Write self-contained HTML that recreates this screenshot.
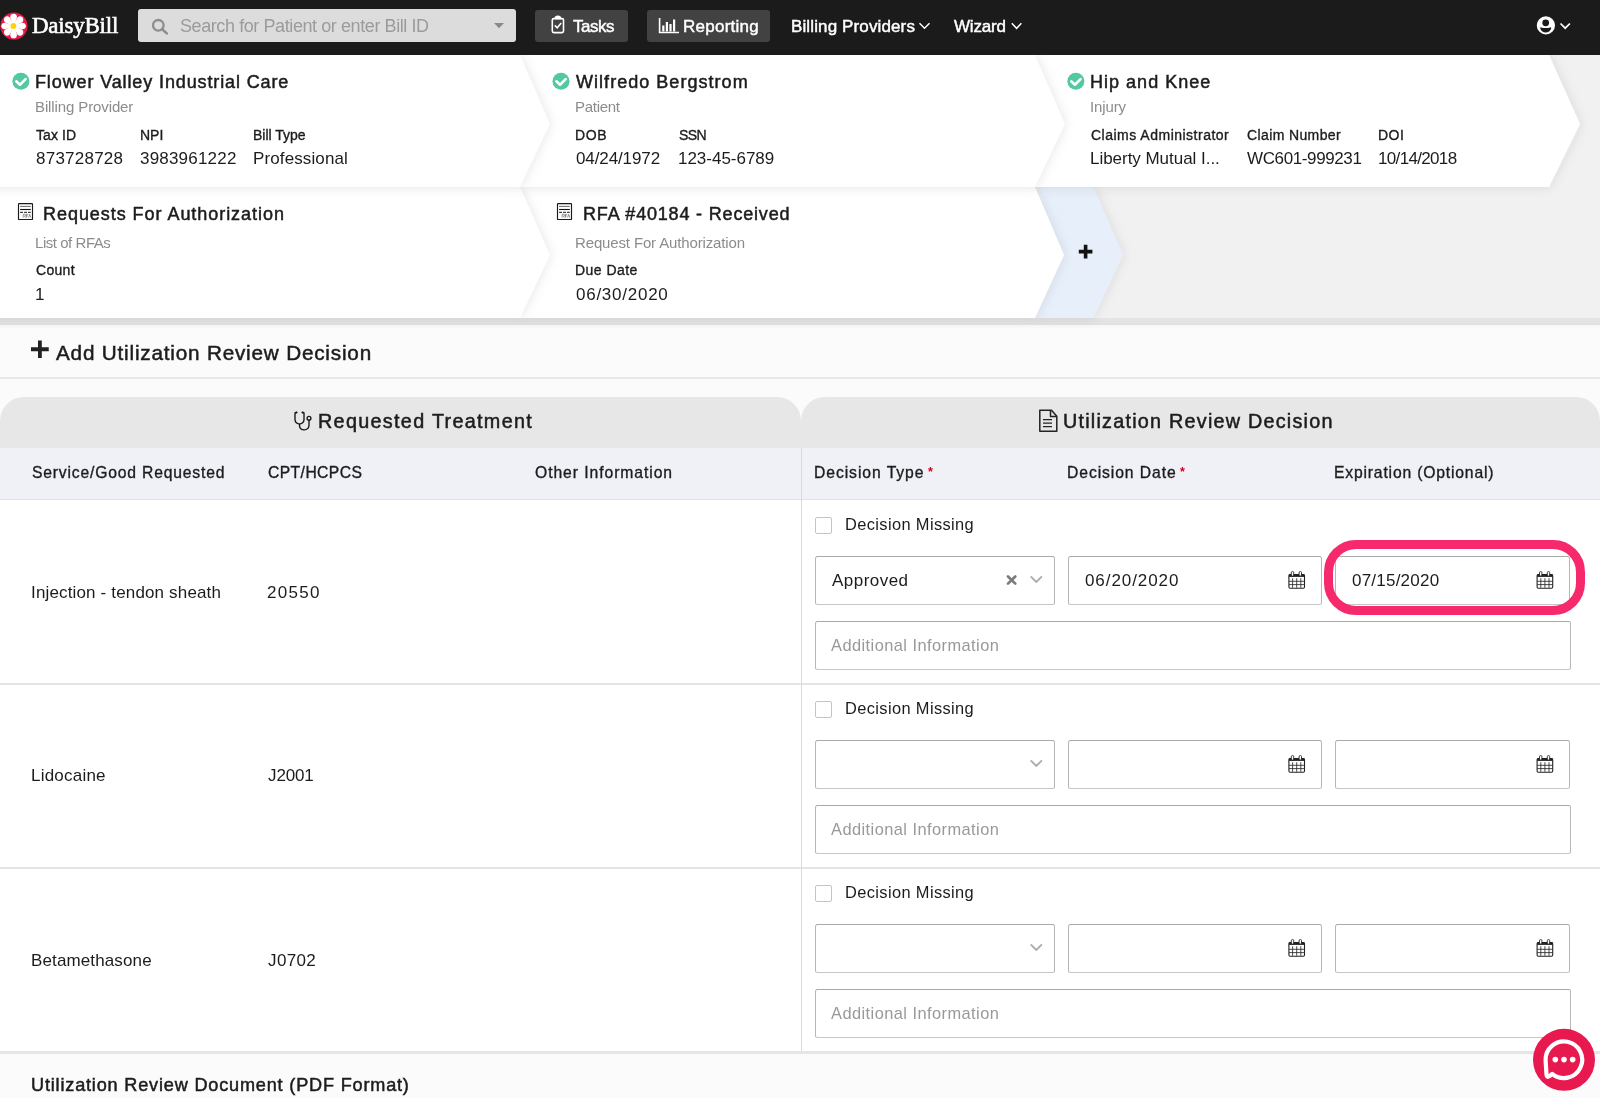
<!DOCTYPE html>
<html><head><meta charset="utf-8">
<style>
html,body{margin:0;padding:0;}
body{width:1600px;height:1098px;overflow:hidden;position:relative;background:#fbfbfb;font-family:"Liberation Sans",sans-serif;}
.a{position:absolute;box-sizing:border-box;}
.t{position:absolute;white-space:nowrap;will-change:transform;}
svg{position:absolute;overflow:visible;}
.inp{position:absolute;box-sizing:border-box;border:1px solid #b6b6b6;border-top-color:#a9a9a9;border-bottom-color:#c6c6c6;border-radius:2.5px;background:#fff;}
.cb{position:absolute;box-sizing:border-box;width:17px;height:16.5px;border:1px solid #c4c4c4;border-radius:2px;background:#fff;}
</style></head><body>

<!-- card area bg -->
<div class="a" style="left:0;top:54px;width:1600px;height:264px;background:#f1f1f1;"></div>
<div class="a" style="left:0;top:318px;width:1600px;height:7px;background:linear-gradient(#e5e5e5,#e1e1e1);"></div>
<div class="a" style="left:0;top:325px;width:1600px;height:4px;background:linear-gradient(#f6f6f6,#fbfbfb);"></div>
<svg style="left:0;top:0" width="1600" height="330">
  <defs>
    <filter id="sh" x="-10%" y="-30%" width="120%" height="160%">
      <feDropShadow dx="0" dy="0" stdDeviation="6" flood-color="#000" flood-opacity="0.11"/>
    </filter>
  </defs>
  <polygon filter="url(#sh)" fill="#e7effa" points="1035,187 1093,187 1123,255 1093,318 1035,318 1064,255"/>
  <polygon filter="url(#sh)" fill="#fff" points="520,187 1035,187 1064,255 1035,318 520,318 550,255"/>
  <polygon filter="url(#sh)" fill="#fff" points="-20,187 520,187 550,255 520,318 -20,318"/>
  <polygon filter="url(#sh)" fill="#fff" points="1035,55 1549,55 1580,124 1549,187 1035,187 1065,124"/>
  <polygon filter="url(#sh)" fill="#fff" points="520,55 1035,55 1065,124 1035,187 520,187 550,124"/>
  <polygon filter="url(#sh)" fill="#fff" points="-20,55 520,55 550,124 520,187 -20,187"/>
</svg>

<!-- nav -->
<div class="a" style="left:0;top:0;width:1600px;height:54.5px;background:#1b1b1b;"></div>
<svg style="left:0;top:0" width="40" height="54" viewBox="0 0 40 54">
  <circle cx="13.9" cy="26.1" r="13.6" fill="#e8194a"/>
  <g fill="#fff" transform="translate(13.6,26)"><path transform="rotate(0)" d="M-1.3 -2.2 L-3.3 -8.4 A3.35 3.35 0 1 1 3.3 -8.4 L1.3 -2.2 Z"/><path transform="rotate(45)" d="M-1.3 -2.2 L-3.3 -8.4 A3.35 3.35 0 1 1 3.3 -8.4 L1.3 -2.2 Z"/><path transform="rotate(90)" d="M-1.3 -2.2 L-3.3 -8.4 A3.35 3.35 0 1 1 3.3 -8.4 L1.3 -2.2 Z"/><path transform="rotate(135)" d="M-1.3 -2.2 L-3.3 -8.4 A3.35 3.35 0 1 1 3.3 -8.4 L1.3 -2.2 Z"/><path transform="rotate(180)" d="M-1.3 -2.2 L-3.3 -8.4 A3.35 3.35 0 1 1 3.3 -8.4 L1.3 -2.2 Z"/><path transform="rotate(225)" d="M-1.3 -2.2 L-3.3 -8.4 A3.35 3.35 0 1 1 3.3 -8.4 L1.3 -2.2 Z"/><path transform="rotate(270)" d="M-1.3 -2.2 L-3.3 -8.4 A3.35 3.35 0 1 1 3.3 -8.4 L1.3 -2.2 Z"/><path transform="rotate(315)" d="M-1.3 -2.2 L-3.3 -8.4 A3.35 3.35 0 1 1 3.3 -8.4 L1.3 -2.2 Z"/><circle r="3.8"/></g>
  <circle cx="13.4" cy="25.9" r="2.9" fill="#ffd200"/>
</svg>
<div class="a" style="left:138px;top:9.25px;width:378px;height:32.5px;background:#dcdcdc;border-radius:3px;"></div>
<div class="a" style="left:535px;top:9.6px;width:92.8px;height:32px;background:#424242;border-radius:3px;"></div>
<div class="a" style="left:647px;top:9.6px;width:123px;height:32px;background:#424242;border-radius:3px;"></div>
<svg style="left:0;top:0" width="1600" height="54">
  <circle cx="158.3" cy="25.3" r="5.3" fill="none" stroke="#8e8e8e" stroke-width="2.3"/>
  <line x1="162.2" y1="29.2" x2="166.8" y2="33.4" stroke="#8e8e8e" stroke-width="2.6" stroke-linecap="round"/>
  <path d="M494 23 L504 23 L499 28.3 Z" fill="#8a8a8a"/>
  <rect x="552.3" y="18.6" width="11.2" height="14" rx="1.5" fill="none" stroke="#fff" stroke-width="1.6"/>
  <path d="M555.3 18.6 L555.3 17.3 Q557.9 15.2 560.5 17.3 L560.5 18.6 Z" fill="#fff" stroke="#fff" stroke-width="1.3"/>
  <path d="M554.8 25.4 L557.2 27.8 L561.2 23" fill="none" stroke="#fff" stroke-width="1.5"/>
  <path d="M659.6 18 L659.6 32.5 L679 32.5" fill="none" stroke="#fff" stroke-width="1.6"/>
  <rect x="662.2" y="25.5" width="2.2" height="6" fill="#fff"/>
  <rect x="665.8" y="22" width="2.2" height="9.5" fill="#fff"/>
  <rect x="669.4" y="24" width="2.2" height="7.5" fill="#fff"/>
  <rect x="673" y="19.5" width="2.2" height="12" fill="#fff"/>
  <path d="M919.5 23.3 L924.5 28.3 L929.5 23.3" fill="none" stroke="#fff" stroke-width="1.5"/>
  <path d="M1011.8 23.3 L1016.6 28.3 L1021.4 23.3" fill="none" stroke="#fff" stroke-width="1.5"/>
  <circle cx="1545.9" cy="25.4" r="9.1" fill="#fff"/>
  <circle cx="1545.7" cy="22.85" r="3.4" fill="#1b1b1b"/>
  <path d="M1540.4 27.2 Q1545.7 29 1551 27.2 L1551.2 28.6 Q1549.6 32.5 1545.7 32.6 Q1541.8 32.5 1540.2 28.6 Z" fill="#1b1b1b"/>
  <path d="M1560.5 23.5 L1565.2 28.2 L1569.9 23.5" fill="none" stroke="#fff" stroke-width="1.7"/>
</svg>

<!-- card icons -->
<svg style="left:0;top:0" width="1600" height="330">
  <g id="chk">
    <circle cx="20.9" cy="81.25" r="8.5" fill="#52c9a0"/>
    <path d="M16.3 81.3 L19.9 84.7 L25.6 79.1" fill="none" stroke="#fff" stroke-width="2.6" stroke-linecap="round" stroke-linejoin="round"/>
  </g>
  <use href="#chk" x="540.1" y="0"/>
  <use href="#chk" x="1054.95" y="0"/>
  <g id="rfa">
    <rect x="18.5" y="203.6" width="14" height="15.9" rx="0.6" fill="none" stroke="#1a1a1a" stroke-width="1.15"/>
    <line x1="20.1" y1="206.4" x2="30.8" y2="206.4" stroke="#666" stroke-width="1"/>
    <line x1="20.1" y1="209.5" x2="30.8" y2="209.5" stroke="#111" stroke-width="1.1"/>
    <path d="M20.1 212.3 H23 M24.1 212.3 H27 M28 212.3 H30.8" stroke="#111" stroke-width="1"/>
    <path d="M23.2 217.6 V214.3 H24.6 Q25.6 214.3 25.6 215.2 Q25.6 216 24.4 216 L25.7 217.6 M26.5 217.6 V214.3 H28.2 M26.5 215.9 H27.8 M28.6 217.6 L29.7 214.3 L30.8 217.6" fill="none" stroke="#666" stroke-width="0.7"/>
  </g>
  <use href="#rfa" x="539" y="0"/>
  <path d="M1085.6 244.8 V258.5 M1078.8 251.6 H1092.4" stroke="#111" stroke-width="3.6"/>
</svg>

<!-- section -->
<div class="a" style="left:0;top:377px;width:1600px;height:2px;background:#e9e9e9;"></div>
<svg style="left:0;top:0" width="100" height="400">
  <path d="M39.9 340.5 V358 M31 349.25 H48.75" stroke="#222" stroke-width="3.8"/>
</svg>
<div class="a" style="left:0;top:397px;width:800.5px;height:51px;background:#e7e7e7;border-radius:24px 24px 0 0;"></div>
<div class="a" style="left:800.5px;top:397px;width:799.5px;height:51px;background:#e7e7e7;border-radius:24px 24px 0 0;"></div>
<div class="a" style="left:0;top:448px;width:1600px;height:52px;background:#f0f1f6;border-bottom:1px solid #e2e2e6;"></div>
<div class="a" style="left:0;top:500px;width:1600px;height:551px;background:#fff;"></div>
<div class="a" style="left:0;top:683px;width:1600px;height:1.5px;background:#e4e4e4;"></div>
<div class="a" style="left:0;top:867px;width:1600px;height:1.5px;background:#e4e4e4;"></div>
<div class="a" style="left:800.8px;top:448px;width:1.2px;height:603px;background:#d9d9d9;"></div>
<div class="a" style="left:0;top:1051px;width:1600px;height:3px;background:#e6e6e6;"></div>
<div class="a" style="left:0;top:1054px;width:1600px;height:44px;background:#fbfbfb;"></div>

<svg style="left:0;top:0" width="1600" height="440">
  <!-- stethoscope -->
  <g fill="none" stroke="#151515" stroke-width="1.35" stroke-linecap="round" stroke-linejoin="round">
    <path d="M296.6 412.4 L295 413 L295 419.6 Q295 423.3 299.5 424.2 Q304 423.3 304 419.6 L304 413 L302.4 412.4"/>
    <path d="M299.5 424.2 L299.6 426.3 Q300.2 429.8 304.2 429.8 Q308.6 429.6 309 425.5 L309 420.2"/>
    <circle cx="309" cy="418.3" r="1.9"/>
  </g>
  <circle cx="296.4" cy="412.5" r="1.05" fill="#111"/>
  <circle cx="302.6" cy="412.5" r="1.05" fill="#111"/>
  <!-- doc -->
  <g fill="none" stroke="#222" stroke-width="1.5" stroke-linejoin="round">
    <path d="M1039.8 410.2 H1051.5 L1056.8 416.3 V431.3 H1039.8 Z"/>
    <path d="M1050.5 410.2 V416.4 H1056.8"/>
    <path d="M1043 419.7 H1052 M1043 423.2 H1052 M1043 426.6 H1052" stroke-width="1.3"/>
  </g>
</svg>

<!-- asterisks -->
<div class="t" style="left:927.6px;top:465.5px;font-size:12.5px;line-height:12.5px;color:#d0021b;font-family:'Liberation Sans';font-weight:bold;">*</div>
<div class="t" style="left:1179.6px;top:465.5px;font-size:12.5px;line-height:12.5px;color:#d0021b;font-family:'Liberation Sans';font-weight:bold;">*</div>

<!-- forms -->
<div class="cb" style="left:815.2px;top:517.2px;"></div>
<div class="cb" style="left:815.2px;top:701.2px;"></div>
<div class="cb" style="left:815.2px;top:885.2px;"></div>

<div class="inp" style="left:815.2px;top:556.3px;width:239.4px;height:49px;"></div>
<div class="inp" style="left:1068.2px;top:556.3px;width:253.4px;height:49px;"></div>
<div class="inp" style="left:1335.4px;top:556.3px;width:235.1px;height:48.5px;"></div>
<div class="inp" style="left:815.2px;top:621px;width:756px;height:49.4px;"></div>

<div class="inp" style="left:815.2px;top:740.3px;width:239.4px;height:49px;"></div>
<div class="inp" style="left:1068.2px;top:740.3px;width:253.4px;height:49px;"></div>
<div class="inp" style="left:1335.4px;top:740.3px;width:235.1px;height:48.5px;"></div>
<div class="inp" style="left:815.2px;top:805px;width:756px;height:49.4px;"></div>

<div class="inp" style="left:815.2px;top:924.3px;width:239.4px;height:49px;"></div>
<div class="inp" style="left:1068.2px;top:924.3px;width:253.4px;height:49px;"></div>
<div class="inp" style="left:1335.4px;top:924.3px;width:235.1px;height:48.5px;"></div>
<div class="inp" style="left:815.2px;top:989px;width:756px;height:49.4px;"></div>

<svg style="left:0;top:0" width="1600" height="1098">
  <defs>
    <g id="cal">
      <rect x="1288.9" y="574.5" width="15.6" height="13.7" rx="1.2" fill="none" stroke="#222" stroke-width="1.1"/>
      <rect x="1288.9" y="574.3" width="15.6" height="2.6" fill="#222"/>
      <path d="M1292.6 578.3 V587.8 M1296.7 578.3 V587.8 M1300.8 578.3 V587.8 M1289 581.3 H1304.4 M1289 584.6 H1304.4" stroke="#333" stroke-width="0.9"/>
      <rect x="1291.3" y="571.6" width="2.4" height="4.4" rx="1" fill="#fff" stroke="#222" stroke-width="0.9"/>
      <rect x="1299.1" y="571.6" width="2.4" height="4.4" rx="1" fill="#fff" stroke="#222" stroke-width="0.9"/>
    </g>
    <path id="chev" d="M1031.2 576.9 L1036.3 582 L1041.4 576.9" fill="none" stroke="#ababab" stroke-width="1.8" stroke-linecap="round"/>
  </defs>
  <use href="#cal"/><use href="#cal" x="248.2"/>
  <use href="#cal" y="184"/><use href="#cal" x="248.2" y="184"/>
  <use href="#cal" y="368"/><use href="#cal" x="248.2" y="368"/>
  <use href="#chev"/><use href="#chev" y="184"/><use href="#chev" y="368"/>
  <path d="M1008 576.5 L1015.3 583.6 M1015.3 576.5 L1008 583.6" stroke="#7b7b7b" stroke-width="2.7" stroke-linecap="round"/>
</svg>

<!-- pink ring -->
<div class="a" style="left:1323.6px;top:540px;width:261px;height:75.2px;border:9.6px solid #f5296b;border-radius:32px;"></div>

<!-- chat -->
<svg style="left:0;top:0" width="1600" height="1098">
  <circle cx="1564" cy="1059.8" r="31" fill="#e8194f"/>
  <path d="M1549.2 1076.3 Q1546.8 1077.8 1546.5 1074.5 L1545.6 1060.5 A18.3 18.3 0 1 1 1552.2 1073.8 Z" fill="none" stroke="#fff" stroke-width="4.2" stroke-linejoin="round"/>
  <circle cx="1555.3" cy="1059.6" r="2.8" fill="#fff"/>
  <circle cx="1564" cy="1059.6" r="2.8" fill="#fff"/>
  <circle cx="1572.7" cy="1059.6" r="2.8" fill="#fff"/>
</svg>

<div class='t' style='left:32.40px;top:13.74px;line-height:23px;color:#fff;font-family:"Liberation Serif", serif;font-size:23px;font-weight:400;-webkit-text-stroke:0.6px currentColor;letter-spacing:-0.237px;'>DaisyBill</div>
<div class='t' style='left:180.40px;top:16.76px;line-height:18px;color:#9b9b9b;font-family:"Liberation Sans", sans-serif;font-size:18px;font-weight:400;letter-spacing:-0.412px;'>Search for Patient or enter Bill ID</div>
<div class='t' style='left:573.40px;top:17.81px;line-height:17px;color:#fff;font-family:"Liberation Sans", sans-serif;font-size:17px;font-weight:400;-webkit-text-stroke:0.45px currentColor;letter-spacing:-0.500px;'>Tasks</div>
<div class='t' style='left:683.00px;top:17.81px;line-height:17px;color:#fff;font-family:"Liberation Sans", sans-serif;font-size:17px;font-weight:400;-webkit-text-stroke:0.45px currentColor;letter-spacing:0.250px;'>Reporting</div>
<div class='t' style='left:790.80px;top:17.61px;line-height:17px;color:#fff;font-family:"Liberation Sans", sans-serif;font-size:17px;font-weight:400;-webkit-text-stroke:0.45px currentColor;letter-spacing:0.125px;'>Billing Providers</div>
<div class='t' style='left:954.40px;top:17.61px;line-height:17px;color:#fff;font-family:"Liberation Sans", sans-serif;font-size:17px;font-weight:400;-webkit-text-stroke:0.45px currentColor;letter-spacing:-0.200px;'>Wizard</div>
<div class='t' style='left:35.00px;top:73.26px;line-height:18px;color:#1c1c1c;font-family:"Liberation Sans", sans-serif;font-size:18px;font-weight:400;-webkit-text-stroke:0.5px currentColor;letter-spacing:0.879px;'>Flower Valley Industrial Care</div>
<div class='t' style='left:35.00px;top:99.30px;line-height:15px;color:#8c8c8c;font-family:"Liberation Sans", sans-serif;font-size:15px;font-weight:400;letter-spacing:-0.113px;'>Billing Provider</div>
<div class='t' style='left:36.00px;top:127.85px;line-height:14px;color:#1c1c1c;font-family:"Liberation Sans", sans-serif;font-size:14px;font-weight:400;-webkit-text-stroke:0.35px currentColor;letter-spacing:0.080px;'>Tax ID</div>
<div class='t' style='left:139.60px;top:127.85px;line-height:14px;color:#1c1c1c;font-family:"Liberation Sans", sans-serif;font-size:14px;font-weight:400;-webkit-text-stroke:0.35px currentColor;letter-spacing:0.000px;'>NPI</div>
<div class='t' style='left:253.40px;top:127.85px;line-height:14px;color:#1c1c1c;font-family:"Liberation Sans", sans-serif;font-size:14px;font-weight:400;-webkit-text-stroke:0.35px currentColor;letter-spacing:0.000px;'>Bill Type</div>
<div class='t' style='left:36.00px;top:150.11px;line-height:17px;color:#1c1c1c;font-family:"Liberation Sans", sans-serif;font-size:17px;font-weight:400;letter-spacing:0.237px;'>873728728</div>
<div class='t' style='left:140.10px;top:150.11px;line-height:17px;color:#1c1c1c;font-family:"Liberation Sans", sans-serif;font-size:17px;font-weight:400;letter-spacing:0.200px;'>3983961222</div>
<div class='t' style='left:253.15px;top:150.11px;line-height:17px;color:#1c1c1c;font-family:"Liberation Sans", sans-serif;font-size:17px;font-weight:400;letter-spacing:0.114px;'>Professional</div>
<div class='t' style='left:576.00px;top:73.26px;line-height:18px;color:#1c1c1c;font-family:"Liberation Sans", sans-serif;font-size:18px;font-weight:400;-webkit-text-stroke:0.5px currentColor;letter-spacing:1.035px;'>Wilfredo Bergstrom</div>
<div class='t' style='left:575.00px;top:99.30px;line-height:15px;color:#8c8c8c;font-family:"Liberation Sans", sans-serif;font-size:15px;font-weight:400;letter-spacing:-0.283px;'>Patient</div>
<div class='t' style='left:575.00px;top:127.85px;line-height:14px;color:#1c1c1c;font-family:"Liberation Sans", sans-serif;font-size:14px;font-weight:400;-webkit-text-stroke:0.35px currentColor;letter-spacing:0.600px;'>DOB</div>
<div class='t' style='left:678.80px;top:127.85px;line-height:14px;color:#1c1c1c;font-family:"Liberation Sans", sans-serif;font-size:14px;font-weight:400;-webkit-text-stroke:0.35px currentColor;letter-spacing:-0.600px;'>SSN</div>
<div class='t' style='left:576.00px;top:150.11px;line-height:17px;color:#1c1c1c;font-family:"Liberation Sans", sans-serif;font-size:17px;font-weight:400;letter-spacing:-0.111px;'>04/24/1972</div>
<div class='t' style='left:677.80px;top:150.11px;line-height:17px;color:#1c1c1c;font-family:"Liberation Sans", sans-serif;font-size:17px;font-weight:400;letter-spacing:-0.020px;'>123-45-6789</div>
<div class='t' style='left:1089.60px;top:73.26px;line-height:18px;color:#1c1c1c;font-family:"Liberation Sans", sans-serif;font-size:18px;font-weight:400;-webkit-text-stroke:0.5px currentColor;letter-spacing:1.018px;'>Hip and Knee</div>
<div class='t' style='left:1089.60px;top:99.30px;line-height:15px;color:#8c8c8c;font-family:"Liberation Sans", sans-serif;font-size:15px;font-weight:400;letter-spacing:-0.120px;'>Injury</div>
<div class='t' style='left:1090.60px;top:127.85px;line-height:14px;color:#1c1c1c;font-family:"Liberation Sans", sans-serif;font-size:14px;font-weight:400;-webkit-text-stroke:0.35px currentColor;letter-spacing:0.495px;'>Claims Administrator</div>
<div class='t' style='left:1246.80px;top:127.85px;line-height:14px;color:#1c1c1c;font-family:"Liberation Sans", sans-serif;font-size:14px;font-weight:400;-webkit-text-stroke:0.35px currentColor;letter-spacing:0.382px;'>Claim Number</div>
<div class='t' style='left:1378.40px;top:127.85px;line-height:14px;color:#1c1c1c;font-family:"Liberation Sans", sans-serif;font-size:14px;font-weight:400;-webkit-text-stroke:0.35px currentColor;letter-spacing:0.450px;'>DOI</div>
<div class='t' style='left:1089.60px;top:150.11px;line-height:17px;color:#1c1c1c;font-family:"Liberation Sans", sans-serif;font-size:17px;font-weight:400;letter-spacing:-0.033px;'>Liberty Mutual I...</div>
<div class='t' style='left:1246.80px;top:150.11px;line-height:17px;color:#1c1c1c;font-family:"Liberation Sans", sans-serif;font-size:17px;font-weight:400;letter-spacing:-0.382px;'>WC601-999231</div>
<div class='t' style='left:1378.40px;top:150.11px;line-height:17px;color:#1c1c1c;font-family:"Liberation Sans", sans-serif;font-size:17px;font-weight:400;letter-spacing:-0.667px;'>10/14/2018</div>
<div class='t' style='left:42.50px;top:204.76px;line-height:18px;color:#1c1c1c;font-family:"Liberation Sans", sans-serif;font-size:18px;font-weight:400;-webkit-text-stroke:0.5px currentColor;letter-spacing:0.952px;'>Requests For Authorization</div>
<div class='t' style='left:35.00px;top:234.50px;line-height:15px;color:#8c8c8c;font-family:"Liberation Sans", sans-serif;font-size:15px;font-weight:400;letter-spacing:-0.455px;'>List of RFAs</div>
<div class='t' style='left:36.00px;top:263.45px;line-height:14px;color:#1c1c1c;font-family:"Liberation Sans", sans-serif;font-size:14px;font-weight:400;-webkit-text-stroke:0.35px currentColor;letter-spacing:0.300px;'>Count</div>
<div class='t' style='left:35.00px;top:285.81px;line-height:17px;color:#1c1c1c;font-family:"Liberation Sans", sans-serif;font-size:17px;font-weight:400;letter-spacing:0.000px;'>1</div>
<div class='t' style='left:582.50px;top:204.76px;line-height:18px;color:#1c1c1c;font-family:"Liberation Sans", sans-serif;font-size:18px;font-weight:400;-webkit-text-stroke:0.5px currentColor;letter-spacing:0.820px;'>RFA #40184 - Received</div>
<div class='t' style='left:575.00px;top:234.50px;line-height:15px;color:#8c8c8c;font-family:"Liberation Sans", sans-serif;font-size:15px;font-weight:400;letter-spacing:-0.142px;'>Request For Authorization</div>
<div class='t' style='left:575.00px;top:263.45px;line-height:14px;color:#1c1c1c;font-family:"Liberation Sans", sans-serif;font-size:14px;font-weight:400;-webkit-text-stroke:0.35px currentColor;letter-spacing:0.457px;'>Due Date</div>
<div class='t' style='left:576.00px;top:285.81px;line-height:17px;color:#1c1c1c;font-family:"Liberation Sans", sans-serif;font-size:17px;font-weight:400;letter-spacing:0.744px;'>06/30/2020</div>
<div class='t' style='left:56.40px;top:342.68px;line-height:20.7px;color:#1c1c1c;font-family:"Liberation Sans", sans-serif;font-size:20.7px;font-weight:400;-webkit-text-stroke:0.5px currentColor;letter-spacing:0.808px;'>Add Utilization Review Decision</div>
<div class='t' style='left:317.55px;top:412.24px;line-height:19.8px;color:#1c1c1c;font-family:"Liberation Sans", sans-serif;font-size:19.8px;font-weight:400;-webkit-text-stroke:0.5px currentColor;letter-spacing:1.306px;'>Requested Treatment</div>
<div class='t' style='left:1063.40px;top:412.24px;line-height:19.8px;color:#1c1c1c;font-family:"Liberation Sans", sans-serif;font-size:19.8px;font-weight:400;-webkit-text-stroke:0.5px currentColor;letter-spacing:1.231px;'>Utilization Review Decision</div>
<div class='t' style='left:31.65px;top:464.91px;line-height:15.7px;color:#1c1c1c;font-family:"Liberation Sans", sans-serif;font-size:15.7px;font-weight:400;-webkit-text-stroke:0.35px currentColor;letter-spacing:0.819px;'>Service/Good Requested</div>
<div class='t' style='left:267.90px;top:464.91px;line-height:15.7px;color:#1c1c1c;font-family:"Liberation Sans", sans-serif;font-size:15.7px;font-weight:400;-webkit-text-stroke:0.35px currentColor;letter-spacing:0.412px;'>CPT/HCPCS</div>
<div class='t' style='left:535.00px;top:464.91px;line-height:15.7px;color:#1c1c1c;font-family:"Liberation Sans", sans-serif;font-size:15.7px;font-weight:400;-webkit-text-stroke:0.35px currentColor;letter-spacing:0.938px;'>Other Information</div>
<div class='t' style='left:814.40px;top:464.91px;line-height:15.7px;color:#1c1c1c;font-family:"Liberation Sans", sans-serif;font-size:15.7px;font-weight:400;-webkit-text-stroke:0.35px currentColor;letter-spacing:0.933px;'>Decision Type</div>
<div class='t' style='left:1067.40px;top:464.91px;line-height:15.7px;color:#1c1c1c;font-family:"Liberation Sans", sans-serif;font-size:15.7px;font-weight:400;-webkit-text-stroke:0.35px currentColor;letter-spacing:0.917px;'>Decision Date</div>
<div class='t' style='left:1333.70px;top:464.91px;line-height:15.7px;color:#1c1c1c;font-family:"Liberation Sans", sans-serif;font-size:15.7px;font-weight:400;-webkit-text-stroke:0.35px currentColor;letter-spacing:0.825px;'>Expiration (Optional)</div>
<div class='t' style='left:30.65px;top:583.61px;line-height:17px;color:#1c1c1c;font-family:"Liberation Sans", sans-serif;font-size:17px;font-weight:400;letter-spacing:0.156px;'>Injection - tendon sheath</div>
<div class='t' style='left:266.70px;top:583.61px;line-height:17px;color:#1c1c1c;font-family:"Liberation Sans", sans-serif;font-size:17px;font-weight:400;letter-spacing:1.312px;'>20550</div>
<div class='t' style='left:844.55px;top:516.12px;line-height:16.4px;color:#1c1c1c;font-family:"Liberation Sans", sans-serif;font-size:16.4px;font-weight:400;letter-spacing:0.383px;'>Decision Missing</div>
<div class='t' style='left:831.40px;top:637.22px;line-height:16.4px;color:#999;font-family:"Liberation Sans", sans-serif;font-size:16.4px;font-weight:400;letter-spacing:0.443px;'>Additional Information</div>
<div class='t' style='left:30.65px;top:767.36px;line-height:17px;color:#1c1c1c;font-family:"Liberation Sans", sans-serif;font-size:17px;font-weight:400;letter-spacing:0.219px;'>Lidocaine</div>
<div class='t' style='left:267.70px;top:767.36px;line-height:17px;color:#1c1c1c;font-family:"Liberation Sans", sans-serif;font-size:17px;font-weight:400;letter-spacing:-0.125px;'>J2001</div>
<div class='t' style='left:844.55px;top:700.12px;line-height:16.4px;color:#1c1c1c;font-family:"Liberation Sans", sans-serif;font-size:16.4px;font-weight:400;letter-spacing:0.383px;'>Decision Missing</div>
<div class='t' style='left:831.40px;top:821.22px;line-height:16.4px;color:#999;font-family:"Liberation Sans", sans-serif;font-size:16.4px;font-weight:400;letter-spacing:0.443px;'>Additional Information</div>
<div class='t' style='left:30.65px;top:951.61px;line-height:17px;color:#1c1c1c;font-family:"Liberation Sans", sans-serif;font-size:17px;font-weight:400;letter-spacing:0.125px;'>Betamethasone</div>
<div class='t' style='left:267.70px;top:951.61px;line-height:17px;color:#1c1c1c;font-family:"Liberation Sans", sans-serif;font-size:17px;font-weight:400;letter-spacing:0.375px;'>J0702</div>
<div class='t' style='left:844.55px;top:884.12px;line-height:16.4px;color:#1c1c1c;font-family:"Liberation Sans", sans-serif;font-size:16.4px;font-weight:400;letter-spacing:0.383px;'>Decision Missing</div>
<div class='t' style='left:831.40px;top:1005.22px;line-height:16.4px;color:#999;font-family:"Liberation Sans", sans-serif;font-size:16.4px;font-weight:400;letter-spacing:0.443px;'>Additional Information</div>
<div class='t' style='left:831.55px;top:572.01px;line-height:17px;color:#1c1c1c;font-family:"Liberation Sans", sans-serif;font-size:17px;font-weight:400;letter-spacing:0.464px;'>Approved</div>
<div class='t' style='left:1084.90px;top:571.61px;line-height:17px;color:#1c1c1c;font-family:"Liberation Sans", sans-serif;font-size:17px;font-weight:400;letter-spacing:0.917px;'>06/20/2020</div>
<div class='t' style='left:1351.70px;top:571.61px;line-height:17px;color:#1c1c1c;font-family:"Liberation Sans", sans-serif;font-size:17px;font-weight:400;letter-spacing:0.222px;'>07/15/2020</div>
<div class='t' style='left:31.20px;top:1075.68px;line-height:18.1px;color:#1c1c1c;font-family:"Liberation Sans", sans-serif;font-size:18.1px;font-weight:400;-webkit-text-stroke:0.5px currentColor;letter-spacing:0.821px;'>Utilization Review Document (PDF Format)</div>
</body></html>
